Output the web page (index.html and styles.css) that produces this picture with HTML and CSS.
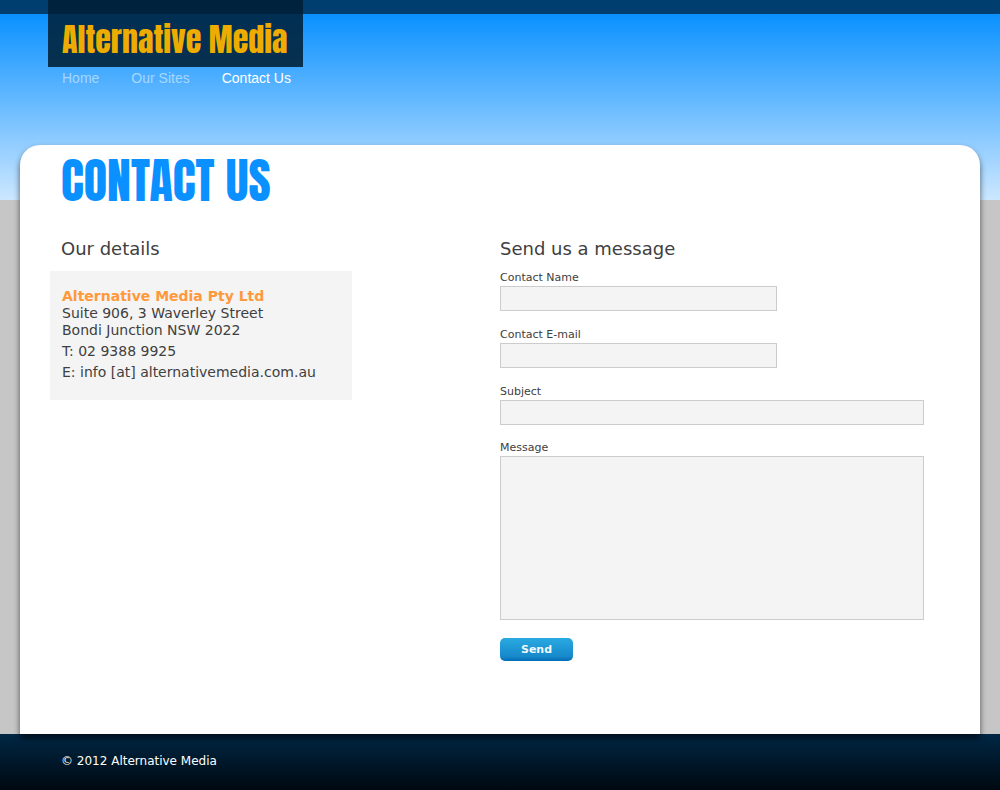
FILE: index.html
```html
<!DOCTYPE html>
<html lang="en">
<head>
<meta charset="utf-8">
<meta name="viewport" content="width=device-width, initial-scale=1">
<title>Contact Us - Alternative Media</title>
<link rel="stylesheet" href="styles.css">
</head>
<body>
<header class="header">
  <div class="brand"><a class="logo" href="#">Alternative Media</a></div>
  <nav class="nav">
    <a class="nav-link" href="#">Home</a>
    <a class="nav-link" href="#">Our Sites</a>
    <a class="nav-link active" href="#">Contact Us</a>
  </nav>
</header>
<main class="panel">
  <h1 class="title">CONTACT US</h1>
  <div class="columns">
    <section class="details">
      <h2 class="heading">Our details</h2>
      <address class="card">
        <strong class="company">Alternative Media Pty Ltd</strong>
        <span>Suite 906, 3 Waverley Street</span>
        <span>Bondi Junction NSW 2022</span>
        <span class="contact-line">T: 02 9388 9925</span>
        <span class="contact-line">E: info [at] alternativemedia.com.au</span>
      </address>
    </section>
    <section class="message">
      <h2 class="heading">Send us a message</h2>
      <form class="form">
        <label class="label" for="name">Contact Name</label>
        <input class="field short" id="name" type="text">
        <label class="label" for="email">Contact E-mail</label>
        <input class="field short" id="email" type="email">
        <label class="label" for="subject">Subject</label>
        <input class="field" id="subject" type="text">
        <label class="label" for="body">Message</label>
        <textarea class="field area" id="body"></textarea>
        <button class="send" type="button">Send</button>
      </form>
    </section>
  </div>
</main>
<footer class="footer">© 2012 Alternative Media</footer>
</body>
</html>
```
FILE: styles.css
```css
* {
  box-sizing: border-box;
}

body {
  margin: 0;
  min-height: 100vh;
  display: flex;
  flex-direction: column;
  color: #404040;
  font-family: Verdana, "DejaVu Sans", sans-serif;
  background: linear-gradient(#0a91ff, #cce7ff) 0 14px / 100% 186px no-repeat #c6c6c6;
}

.header {
  padding: 0 48px;
  height: 145px;
  background: linear-gradient(#003e70, #003e70) 0 0 / 100% 14px no-repeat;
}

.brand {
  width: 255px;
  height: 67px;
  padding: 20px 14px 0;
  background: linear-gradient(#00223c 14px, #002f53 14px, #08304f);
}

.logo {
  color: #efac00;
  font: 400 32px/40px Anton, Impact, "Liberation Sans Narrow", sans-serif;
  text-decoration: none;
  white-space: nowrap;
}

.nav {
  padding-left: 14px;
  display: flex;
  gap: 32px;
  font: 14px/22px Arial, "Liberation Sans", sans-serif;
}

.nav-link {
  color: #a5d7ff;
  text-decoration: none;
}

.nav-link.active {
  color: #fff;
}

.panel {
  position: relative;
  flex: 1;
  margin: 0 20px;
  padding: 11px 56px 72px 30px;
  border-radius: 20px 20px 0 0;
  background: #fff;
  box-shadow: 0 4px 6px rgba(0, 0, 0, 0.6);
}

.title {
  margin: 0 0 20px 11px;
  color: #0a91ff;
  font: 400 48px/50px Anton, Impact, "Liberation Sans Narrow", sans-serif;
}

.columns {
  display: grid;
  grid-template-columns: 450px 1fr;
}

.heading {
  margin: 0;
  padding-top: 2px;
  font-size: 18px;
  font-weight: 400;
  line-height: 42px;
}

.details .heading {
  padding-left: 11px;
}

.card {
  width: 302px;
  margin-top: 1px;
  padding: 17px 12px 19px;
  display: flex;
  flex-direction: column;
  background: #f4f4f4;
  font-size: 14px;
  font-style: normal;
  line-height: 17px;
  white-space: nowrap;
}

.company {
  color: #ff993c;
}

.contact-line {
  margin-top: 4px;
}

.form {
  display: flex;
  flex-direction: column;
  align-items: flex-start;
}

.label {
  height: 16px;
  font-size: 11px;
  line-height: 16px;
}

.field {
  width: 100%;
  height: 25px;
  margin: 0 0 16px;
  padding: 2px 6px;
  border: 1px solid #ccc;
  border-radius: 0;
  background: #f4f4f4;
  color: inherit;
  font: inherit;
}

.short {
  width: 277px;
}

#subject {
  margin-bottom: 15px;
}

.area {
  height: 164px;
  margin-bottom: 18px;
  resize: none;
}

.send {
  width: 73px;
  height: 23px;
  padding: 0;
  border: 0;
  border-radius: 5px;
  color: #f0f8ff;
  background: linear-gradient(#29a9e1, #1789cb 80%, #006bb5);
  font: bold 11px/22px Verdana, "DejaVu Sans", sans-serif;
}

.footer {
  height: 56px;
  padding: 18px 61px;
  background: linear-gradient(#002745, #000910);
  color: #fff;
  font-size: 12px;
  line-height: 18px;
}
```
